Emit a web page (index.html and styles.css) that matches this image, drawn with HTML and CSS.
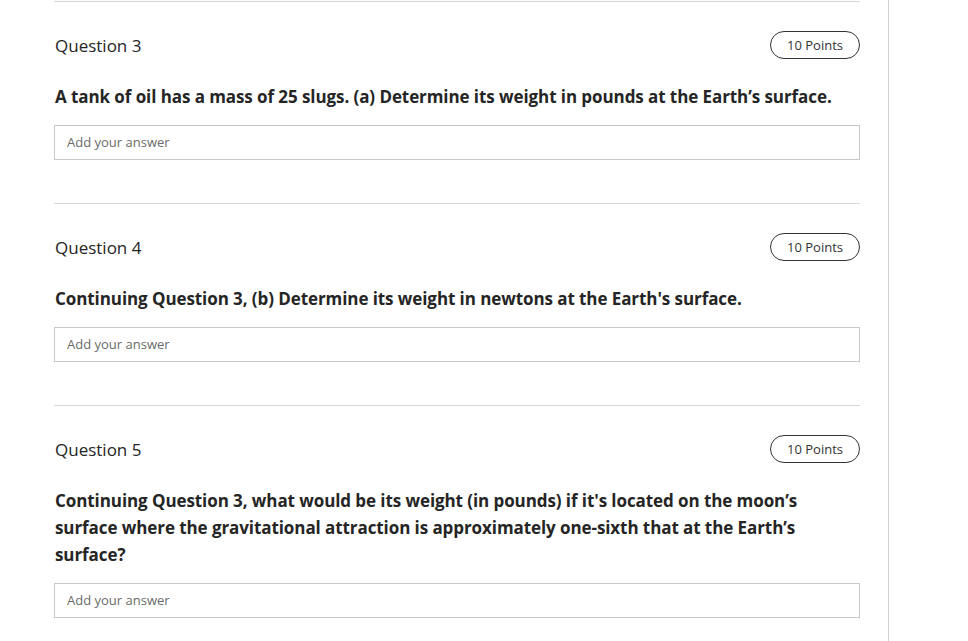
FILE: index.html
```html
<!DOCTYPE html>
<html>
<head>
<meta charset="utf-8">
<link rel="stylesheet" href="styles.css">
</head>
<body>
<div class="page">
  <main class="column">
    <section class="question">
      <div class="q-head">
        <span class="q-title">Question 3</span>
        <span class="points">10 Points</span>
      </div>
      <p class="q-text">A tank of oil has a mass of 25 slugs. (a) Determine its weight in pounds at the Earth’s surface.</p>
      <div class="answer">Add your answer</div>
    </section>
    <section class="question">
      <div class="q-head">
        <span class="q-title">Question 4</span>
        <span class="points">10 Points</span>
      </div>
      <p class="q-text">Continuing Question 3, (b) Determine its weight in newtons at the Earth's surface.</p>
      <div class="answer">Add your answer</div>
    </section>
    <section class="question">
      <div class="q-head">
        <span class="q-title">Question 5</span>
        <span class="points">10 Points</span>
      </div>
      <p class="q-text">Continuing Question 3, what would be its weight (in pounds) if it's located on the moon’s surface where the gravitational attraction is approximately one-sixth that at the Earth’s surface?</p>
      <div class="answer">Add your answer</div>
    </section>
  </main>
</div>
</body>
</html>
```
FILE: styles.css
```css
html, body {
  margin: 0;
  padding: 0;
  background: #ffffff;
}
body {
  font-family: "Open Sans", "Noto Sans", sans-serif;
  color: #252525;
  height: 641px;
  overflow: hidden;
}
.page {
  display: flex;
  height: 641px;
}
.column {
  width: 889px;
  box-sizing: border-box;
  border-right: 1px solid #d0d0d0;
  padding: 1px 28px 0 54px;
}
.question {
  border-top: 1px solid #d6d6d6;
  padding: 29px 0 43px;
}
.q-head {
  display: flex;
  justify-content: space-between;
  align-items: center;
  height: 28px;
}
.q-title {
  font-size: 17px;
  font-weight: 400;
  color: #252525;
  padding-left: 1px;
}
.points {
  box-sizing: border-box;
  width: 90px;
  height: 28px;
  border: 1px solid #333333;
  border-radius: 14px;
  font-size: 13px;
  line-height: 26px;
  text-align: center;
  color: #333333;
}
.q-text {
  margin: 24px 0 15px;
  padding-left: 1px;
  font-size: 17px;
  font-weight: 700;
  letter-spacing: -0.08px;
  line-height: 27px;
  color: #252525;
}
.answer {
  box-sizing: border-box;
  height: 35px;
  border: 1px solid #c8c8c8;
  padding: 0 12px;
  font-size: 13px;
  line-height: 33px;
  color: #6b6b6b;
}
```
